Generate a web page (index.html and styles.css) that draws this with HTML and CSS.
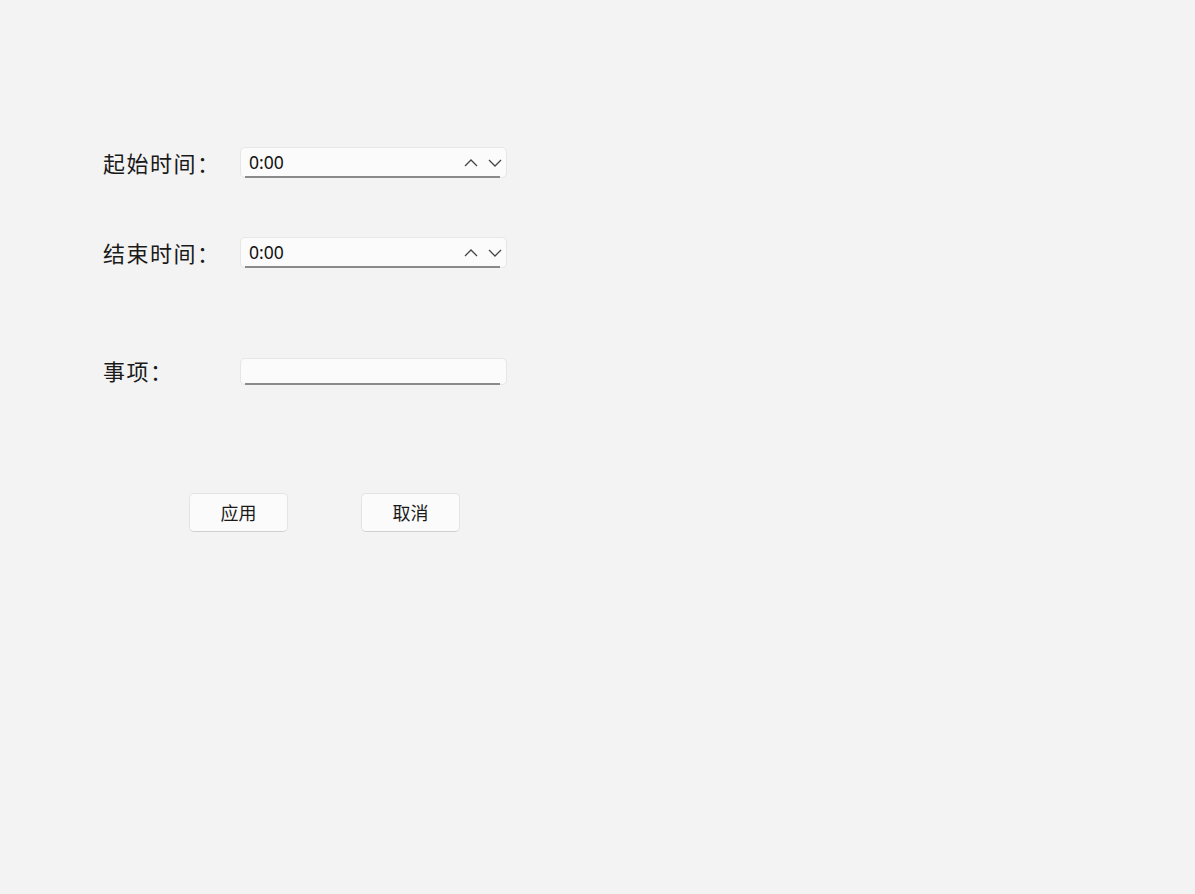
FILE: index.html
```
<!DOCTYPE html>
<html lang="zh-CN">
<head>
  <meta charset="UTF-8" />
  <title>编辑事项</title>
  <link rel="stylesheet" href="styles.css">
</head>
<body>

<div class="form">
  <div class="row row-start">
    <label class="label">起始时间：</label>
    <div class="field spin">
      <span class="value">0:00</span>
      <span class="arrows">
        <svg width="14" height="10" viewBox="0 0 14 10"><path d="M1 8 L7 2 L13 8" fill="none" stroke="#444" stroke-width="1.3"/></svg>
        <svg width="14" height="10" viewBox="0 0 14 10"><path d="M1 2 L7 8 L13 2" fill="none" stroke="#444" stroke-width="1.3"/></svg>
      </span>
    </div>
  </div>

  <div class="row row-end">
    <label class="label">结束时间：</label>
    <div class="field spin">
      <span class="value">0:00</span>
      <span class="arrows">
        <svg width="14" height="10" viewBox="0 0 14 10"><path d="M1 8 L7 2 L13 8" fill="none" stroke="#444" stroke-width="1.3"/></svg>
        <svg width="14" height="10" viewBox="0 0 14 10"><path d="M1 2 L7 8 L13 2" fill="none" stroke="#444" stroke-width="1.3"/></svg>
      </span>
    </div>
  </div>

  <div class="row row-item">
    <label class="label">事项：</label>
    <div class="field text"></div>
  </div>

  <div class="buttons">
    <button class="btn">应用</button>
    <button class="btn">取消</button>
  </div>
</div>

</body>
</html>
```

FILE: styles.css
```
body {
  margin: 0;
  background-color: #f3f3f3;
  color: #1a1a1a;
  font-family: "Noto Sans CJK SC", "Noto Sans", sans-serif;
}
.form {
  padding: 147px 0 0 103px;
}
.row {
  display: flex;
  align-items: center;
}
.row-end {
  margin-top: 59px;
}
.row-item {
  margin-top: 89px;
}
.label {
  width: 137px;
  font-size: 22px;
  letter-spacing: 1.5px;
  line-height: 30px;
  margin-top: -2px;
}
.field {
  position: relative;
  box-sizing: border-box;
  width: 267px;
  height: 31px;
  background: #fbfbfb;
  border: 1px solid #e6e6e6;
  border-radius: 5px;
  display: flex;
  align-items: center;
  justify-content: space-between;
  padding: 0 4px 0 8px;
}
.field::after {
  content: "";
  position: absolute;
  left: 4px;
  right: 6px;
  bottom: -1px;
  height: 2px;
  background: #8a8a8a;
}
.field.text {
  height: 27px;
}
.value {
  font-family: "Noto Sans", sans-serif;
  font-size: 17.5px;
  color: #111;
  margin-top: -2px;
}
.arrows {
  display: flex;
  gap: 10px;
  margin-top: 0;
}
.buttons {
  display: flex;
  gap: 73px;
  margin: 108px 0 0 86px;
}
.btn {
  box-sizing: border-box;
  width: 99px;
  height: 39px;
  background: #fbfbfb;
  border: 1px solid #e4e4e4;
  border-bottom-color: #cfcfcf;
  border-radius: 5px;
  font-family: "Noto Sans CJK SC", sans-serif;
  font-size: 18px;
  color: #1a1a1a;
  padding: 0 0 2px;
}
```
